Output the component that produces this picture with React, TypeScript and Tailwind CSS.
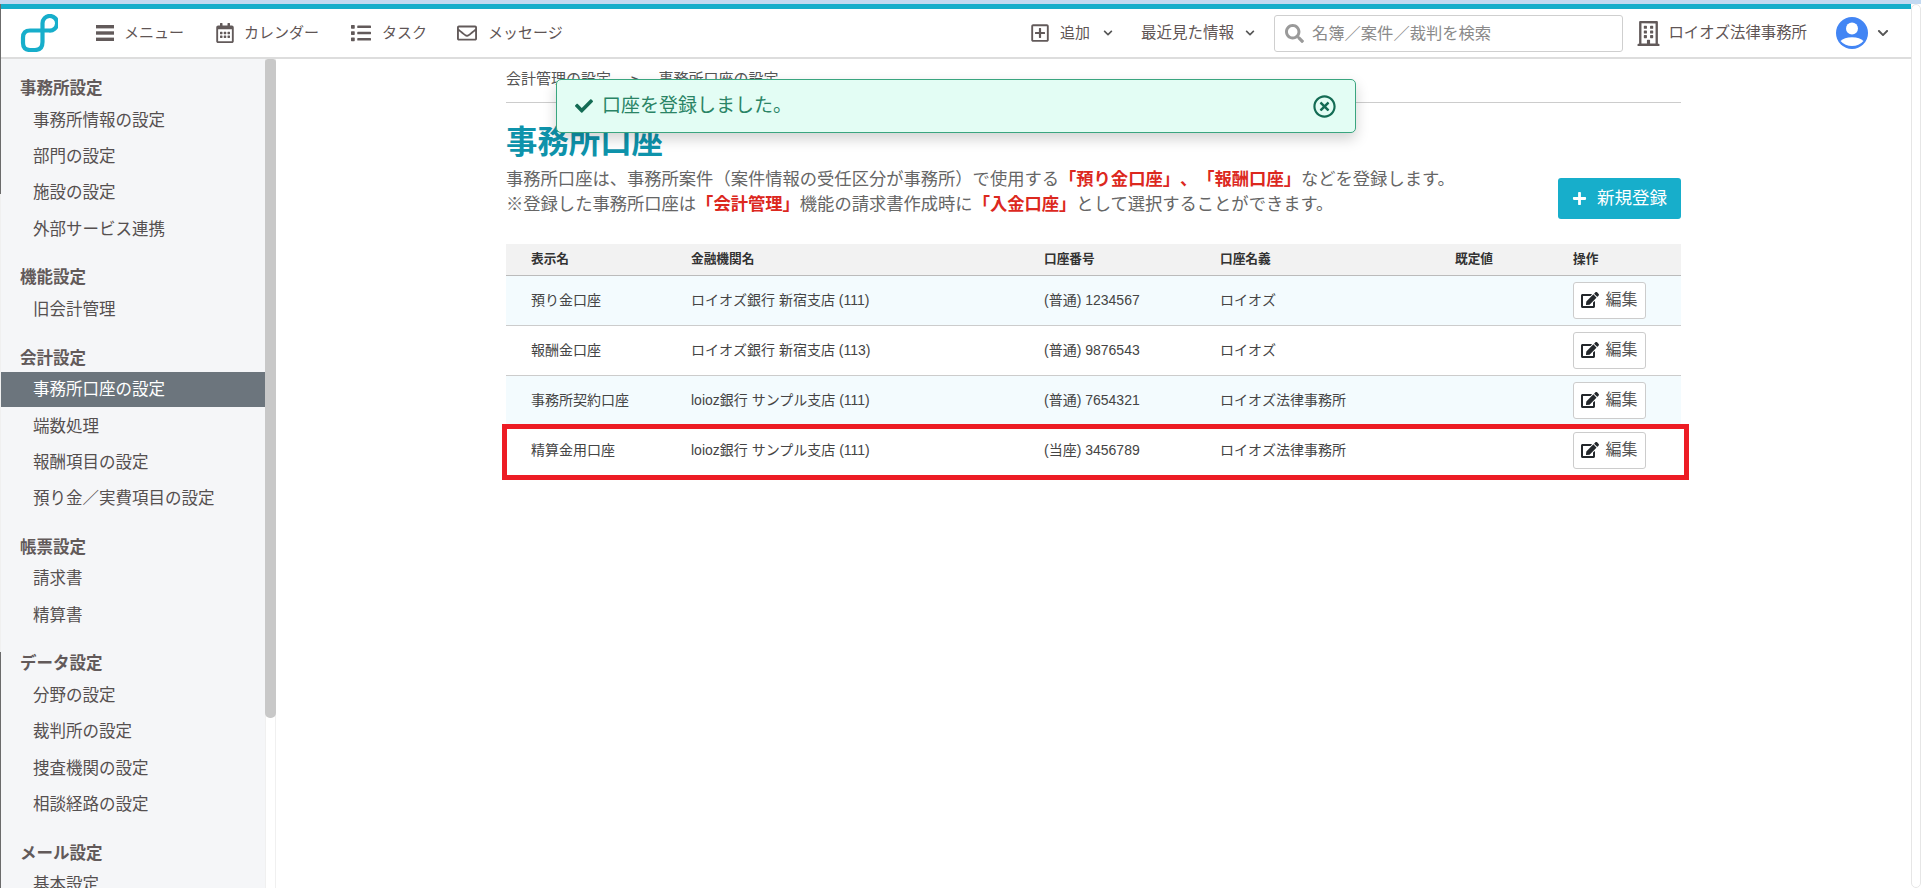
import React from "react";
import {
  FaRegCalendarAlt,
  FaList,
  FaRegEnvelope,
  FaRegPlusSquare,
  FaChevronDown,
  FaSearch,
  FaRegBuilding,
  FaCheck,
  FaRegTimesCircle,
  FaPlus,
  FaEdit,
} from "react-icons/fa";

const sections: { title: string; items: string[] }[] = [
  { title: "事務所設定", items: ["事務所情報の設定", "部門の設定", "施設の設定", "外部サービス連携"] },
  { title: "機能設定", items: ["旧会計管理"] },
  { title: "会計設定", items: ["事務所口座の設定", "端数処理", "報酬項目の設定", "預り金／実費項目の設定"] },
  { title: "帳票設定", items: ["請求書", "精算書"] },
  { title: "データ設定", items: ["分野の設定", "裁判所の設定", "捜査機関の設定", "相談経路の設定"] },
  { title: "メール設定", items: ["基本設定"] },
];

const rows = [
  { name: "預り金口座", bank: "ロイオズ銀行 新宿支店 (111)", no: "(普通) 1234567", holder: "ロイオズ", tint: true },
  { name: "報酬金口座", bank: "ロイオズ銀行 新宿支店 (113)", no: "(普通) 9876543", holder: "ロイオズ", tint: false },
  { name: "事務所契約口座", bank: "loioz銀行 サンプル支店 (111)", no: "(普通) 7654321", holder: "ロイオズ法律事務所", tint: true },
  { name: "精算金用口座", bank: "loioz銀行 サンプル支店 (111)", no: "(当座) 3456789", holder: "ロイオズ法律事務所", tint: false },
];

function Logo() {
  return (
    <svg viewBox="0 0 38 38" className="w-[38px] h-[38px] shrink-0" fill="none" stroke="#17aecb" strokeWidth="4.2">
      <path d="M22.5 9.5 V28 Q22.5 36 15 36 H10 Q3 36 3 29 V23.5 Q3 16.5 10 16.5 H29 A7.3 7.3 0 1 0 22.5 9.5 Z" />
    </svg>
  );
}

function Hamburger() {
  return (
    <svg viewBox="0 0 18 16" className="w-[18px] h-[16px] shrink-0" fill="#625a5a">
      <rect x="0" y="0" width="18" height="3.4" />
      <rect x="0" y="6.3" width="18" height="3.4" />
      <rect x="0" y="12.6" width="18" height="3.4" />
    </svg>
  );
}

function Avatar() {
  return (
    <svg viewBox="0 0 32 32" className="w-[32px] h-[32px] shrink-0">
      <circle cx="16" cy="16" r="16" fill="#4285f4" />
      <circle cx="16" cy="11.5" r="6" fill="#fff" />
      <path d="M4.5 24 Q8 20.2 16 20.2 Q24 20.2 27.5 24 Q23 29 16 29 Q9 29 4.5 24 Z" fill="#fff" />
    </svg>
  );
}

export default function App() {
  return (
    <div className="h-[888px] w-full overflow-hidden flex flex-col bg-white text-[#5f5555] [text-spacing-trim:space-all] font-['Liberation_Sans','Noto_Sans_CJK_JP',sans-serif]">
      <div className="h-[4px] shrink-0 bg-[#c3d9f1]" />
      <div className="flex-1 flex min-h-0">
        <div className="w-px shrink-0 flex flex-col">
          <div className="h-[190px] bg-[#6b6b6b]" />
          <div className="flex-1 bg-[#f0f0f0]" />
          <div className="h-[236px] bg-[#6b6b6b]" />
        </div>

        <div className="flex-1 min-w-0 flex flex-col">
          <div className="h-[5px] shrink-0 bg-[#17aecb]" />
          <header className="h-[50px] shrink-0 flex items-center border-b-2 border-[#dddddd] pl-[19px] pr-[22px] text-[15px]">
            <Logo />
            <div className="ml-[38px] flex items-center gap-[10px]">
              <Hamburger />
              <span>メニュー</span>
            </div>
            <div className="ml-[31px] flex items-center gap-[9px]">
              <FaRegCalendarAlt size={20} color="#625a5a" />
              <span>カレンダー</span>
            </div>
            <div className="ml-[32px] flex items-center gap-[11px]">
              <FaList size={20} color="#625a5a" />
              <span>タスク</span>
            </div>
            <div className="ml-[30px] flex items-center gap-[11px]">
              <FaRegEnvelope size={20} color="#625a5a" />
              <span>メッセージ</span>
            </div>

            <div className="ml-auto flex items-center gap-[10px]">
              <FaRegPlusSquare size={20} color="#625a5a" />
              <span>追加</span>
              <FaChevronDown size={10} color="#555555" className="ml-[3px]" />
            </div>
            <div className="ml-[28px] flex items-center gap-[11px]">
              <span className="text-[15.5px]">最近見た情報</span>
              <FaChevronDown size={10} color="#555555" />
            </div>
            <div className="ml-[19px] w-[349px] h-[37px] border border-[#cfcfcf] rounded-[3px] flex items-center pl-[10px] gap-[8px] text-[16.3px] text-[#8a8a8a]">
              <FaSearch size={19} color="#9a9a9a" />
              <span>名簿／案件／裁判を検索</span>
            </div>
            <div className="ml-[13.5px] flex items-center gap-[7px]">
              <FaRegBuilding size={25} color="#625a5a" />
              <span className="text-[15.4px]">ロイオズ法律事務所</span>
            </div>
            <div className="ml-[29px] flex items-center gap-[9px]">
              <Avatar />
              <FaChevronDown size={12} color="#555555" />
            </div>
          </header>

          <div className="flex-1 min-h-0 flex">
            <aside className="w-[264px] shrink-0 bg-[#f5f6f8] overflow-hidden pt-[16px] text-[16.5px]">
              {sections.map((s) => (
                <div key={s.title} className="mb-[17px]">
                  <div className="h-[27px] flex items-center pl-[19px] font-bold text-[#625a5a]">{s.title}</div>
                  {s.items.map((item) =>
                    item === "事務所口座の設定" ? (
                      <div key={item} className="h-[36.3px] flex items-center">
                        <div className="w-full h-[35px] flex items-center pl-[32px] bg-[#6c757d] text-white">{item}</div>
                      </div>
                    ) : (
                      <div key={item} className="h-[36.3px] flex items-center pl-[32px] text-[#555050]">
                        {item}
                      </div>
                    )
                  )}
                </div>
              ))}
            </aside>

            <div className="w-[11px] shrink-0 bg-white border-x border-[#f0f0f0] relative">
              <div className="h-[659px] w-[11px] -ml-px bg-[#c8c8c8] rounded-b-[5px] rounded-t-[3px]" />
            </div>

            <main className="relative flex-1 min-w-0 pl-[230px] pr-[230px]">
              <div className="h-[44px] flex items-center gap-[20px] border-b border-[#cccccc] text-[15px] text-[#555555] pb-[2px]">
                <span>会計管理の設定</span>
                <span className="text-[#555555] text-[13px] font-bold">&gt;</span>
                <span>事務所口座の設定</span>
              </div>

              <h1 className="mt-[21px] h-[38px] leading-[38px] text-[31.4px] font-bold text-[#0e93ab]">事務所口座</h1>

              <div className="flex items-start justify-between mt-[5px]">
                <div className="text-[17.3px] leading-[25px] text-[#666666]">
                  <p>
                    事務所口座は、事務所案件（案件情報の受任区分が事務所）で使用する
                    <b className="text-[#dc281e]">「預り金口座」、「報酬口座」</b>
                    などを登録します。
                  </p>
                  <p>
                    ※登録した事務所口座は<b className="text-[#dc281e]">「会計管理」</b>機能の請求書作成時に
                    <b className="text-[#dc281e]">「入金口座」</b>として選択することができます。
                  </p>
                </div>
                <button className="mt-[11px] w-[123px] h-[41px] rounded-[3px] bg-[#17aecb] text-white text-[17.5px] flex items-center justify-center gap-[10px]">
                  <FaPlus size={15} />
                  <span>新規登録</span>
                </button>
              </div>

              <div className="relative mt-[25px]">
                <table className="w-full table-fixed border-collapse text-[14px] text-[#444444]">
                  <colgroup>
                    <col className="w-[160px]" />
                    <col className="w-[353px]" />
                    <col className="w-[176px]" />
                    <col className="w-[235px]" />
                    <col className="w-[118px]" />
                    <col />
                  </colgroup>
                  <thead>
                    <tr className="h-[31px] bg-[#f2f2f2] border-b border-[#bbbbbb] text-[12.7px] text-[#333333] font-bold text-left">
                      <th className="pl-[25px] font-bold">表示名</th>
                      <th className="pl-[25px] font-bold">金融機関名</th>
                      <th className="pl-[25px] font-bold">口座番号</th>
                      <th className="pl-[25px] font-bold">口座名義</th>
                      <th className="pl-[25px] font-bold">既定値</th>
                      <th className="pl-[25px] font-bold">操作</th>
                    </tr>
                  </thead>
                  <tbody>
                    {rows.map((r) => (
                      <tr key={r.name} className={`h-[50px] border-b border-[#cccccc] ${r.tint ? "bg-[#f3fbfe]" : "bg-white"}`}>
                        <td className="pl-[25px]">{r.name}</td>
                        <td className="pl-[25px]">{r.bank}</td>
                        <td className="pl-[25px]">{r.no}</td>
                        <td className="pl-[25px]">{r.holder}</td>
                        <td className="pl-[25px]" />
                        <td className="pl-[25px]">
                          <button className="w-[73px] h-[37px] bg-white border border-[#cccccc] rounded-[3px] flex items-center justify-center gap-[6px] text-[16px] text-[#555555]">
                            <FaEdit size={18} color="#23272b" />
                            <span>編集</span>
                          </button>
                        </td>
                      </tr>
                    ))}
                  </tbody>
                </table>
                <div className="absolute left-[-4px] top-[180px] w-[1187px] h-[56px] border-[5px] border-[#ed1c24] pointer-events-none" />
              </div>

              <div className="absolute left-[280px] top-[20px] w-[800px] h-[54px] bg-[#e3fdf4] border border-[#3aa57f] rounded-[5px] shadow-[0_6px_14px_rgba(0,0,0,0.18)] flex items-center pl-[18px] pr-[19px] gap-[9px] text-[19px] text-[#2a8465]">
                <FaCheck size={18} color="#146c54" />
                <span>口座を登録しました。</span>
                <FaRegTimesCircle size={23} color="#146c54" className="ml-auto" />
              </div>
            </main>
          </div>
        </div>

        <div className="w-[10px] shrink-0 bg-white border border-[#e6e6e6] rounded-[5px]" />
      </div>
    </div>
  );
}
